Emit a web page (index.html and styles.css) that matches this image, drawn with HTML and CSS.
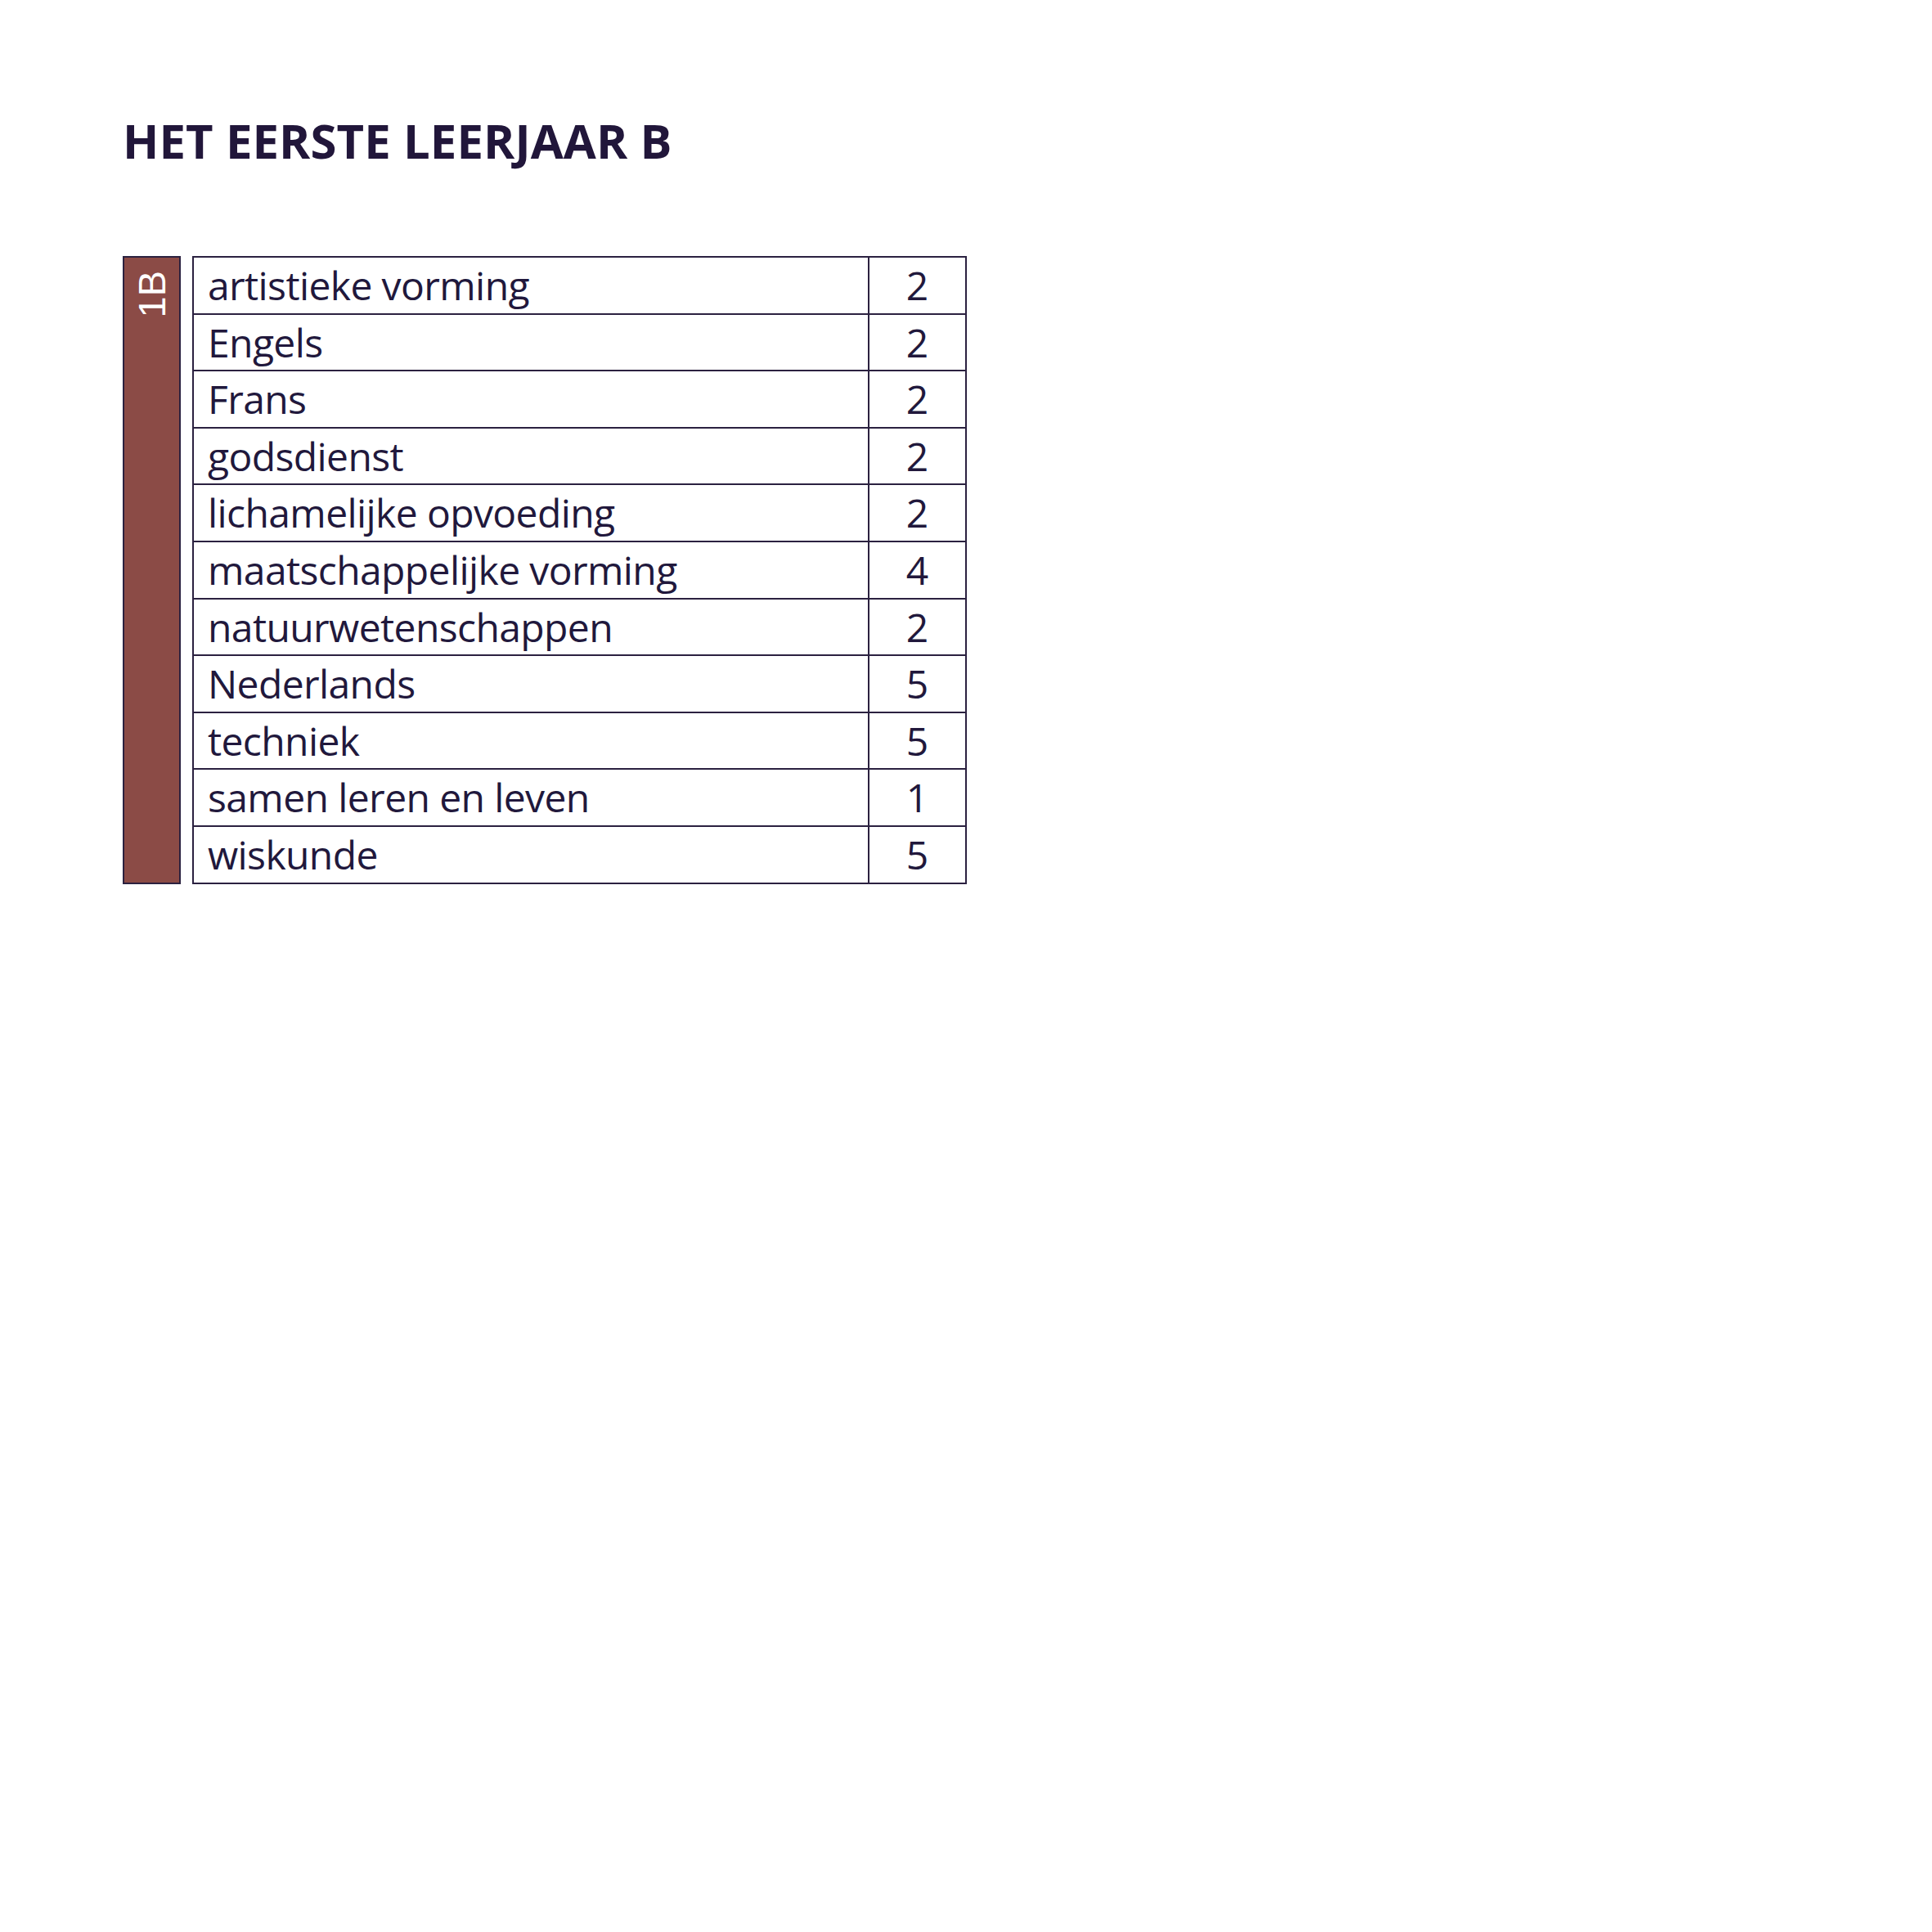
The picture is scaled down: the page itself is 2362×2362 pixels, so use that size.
FILE: index.html
```html
<!DOCTYPE html>
<html lang="nl">
<head>
<meta charset="utf-8">
<title>Het eerste leerjaar B</title>
<link rel="stylesheet" href="styles.css">
</head>
<body>
<main class="page">
  <h1 class="title">HET EERSTE LEERJAAR B</h1>
  <section class="schedule">
    <div class="grade-bar"><span class="grade-label">1B</span></div>
    <div class="subjects">
      <div class="row"><div class="subject">artistieke vorming</div><div class="hours">2</div></div>
      <div class="row"><div class="subject">Engels</div><div class="hours">2</div></div>
      <div class="row"><div class="subject">Frans</div><div class="hours">2</div></div>
      <div class="row"><div class="subject">godsdienst</div><div class="hours">2</div></div>
      <div class="row"><div class="subject">lichamelijke opvoeding</div><div class="hours">2</div></div>
      <div class="row"><div class="subject">maatschappelijke vorming</div><div class="hours">4</div></div>
      <div class="row"><div class="subject">natuurwetenschappen</div><div class="hours">2</div></div>
      <div class="row"><div class="subject">Nederlands</div><div class="hours">5</div></div>
      <div class="row"><div class="subject">techniek</div><div class="hours">5</div></div>
      <div class="row"><div class="subject">samen leren en leven</div><div class="hours">1</div></div>
      <div class="row"><div class="subject">wiskunde</div><div class="hours">5</div></div>
    </div>
  </section>
</main>
</body>
</html>
```

FILE: styles.css
```css
html, body {
  margin: 0;
  padding: 0;
  background: #ffffff;
}

.page {
  padding: 132px 0 0 150px;
  color: #21183c;
  font-family: "Open Sans", "Noto Sans", sans-serif;
}

.title {
  margin: 0 0 102px 0;
  font-size: 58px;
  font-weight: 700;
  letter-spacing: 0.1px;
  line-height: normal;
  color: #21163a;
}

.schedule {
  display: flex;
  align-items: stretch;
  gap: 14px;
}

.grade-bar {
  width: 67px;
  background: #8b4b46;
  border: 2px solid #2b2140;
  display: flex;
  flex-direction: column;
  align-items: center;
  padding-top: 16px;
}

.grade-label {
  writing-mode: vertical-rl;
  transform: rotate(180deg);
  font-family: "Liberation Sans", Arial, sans-serif;
  font-size: 47px;
  line-height: 1;
  color: #ffffff;
}

.subjects {
  width: 943px;
  border: 2px solid #2b2140;
}

.row {
  display: grid;
  grid-template-columns: 1fr 117px;
  height: 67.6px;
  border-top: 2px solid #2b2140;
}

.row:first-child {
  border-top: none;
}

.subject {
  padding-left: 17px;
  font-size: 48px;
  letter-spacing: -0.6px;
  line-height: 67px;
  border-right: 2px solid #2b2140;
  white-space: nowrap;
}

.hours {
  text-align: center;
  font-size: 48px;
  line-height: 67px;
}
```
